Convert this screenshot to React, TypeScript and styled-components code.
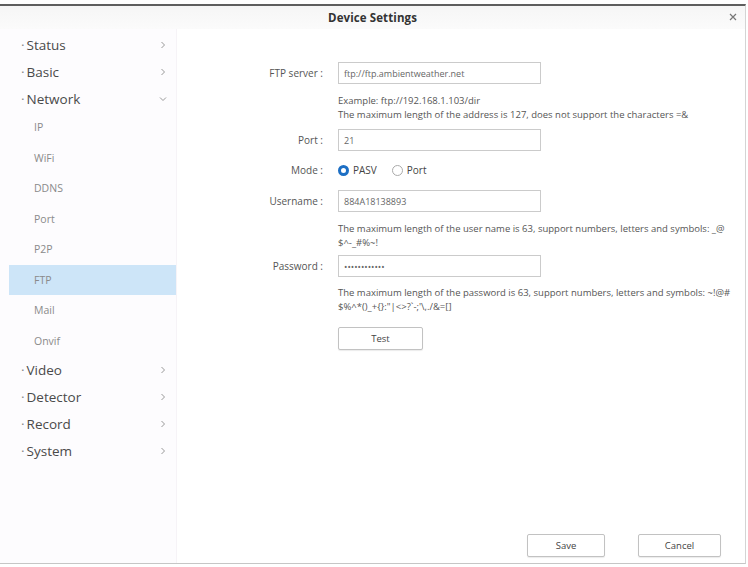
import styled, { createGlobalStyle } from 'styled-components';

const GlobalStyle = createGlobalStyle`
  html, body {
    margin: 0;
    padding: 0;
    background: #ffffff;
  }
  body {
    font-family: "Open Sans", "Noto Sans", sans-serif;
    color: #555;
  }
`;

const Dialog = styled.div`
  box-sizing: border-box;
  margin-top: 4px;
  width: 746px;
  height: 560px;
  border-top: 2px solid #5e5e5e;
  border-right: 1px solid #d4d4d4;
  border-bottom: 1px solid #c6c6c6;
  display: flex;
  flex-direction: column;
`;

const Header = styled.div`
  height: 23px;
  flex: none;
  position: relative;
  display: flex;
  align-items: center;
  justify-content: center;
  background: linear-gradient(#f6f6f6, #fbfbfb);
`;

const Title = styled.div`
  font-size: 11.5px;
  font-weight: 700;
  color: #333;
  letter-spacing: 0.1px;
`;

const Close = styled.div`
  position: absolute;
  right: 7px;
  top: 6px;
  width: 10px;
  height: 10px;
  svg {
    display: block;
  }
`;

const Body = styled.div`
  flex: 1;
  display: flex;
  min-height: 0;
`;

const Sidebar = styled.div`
  width: 177px;
  flex: none;
  box-sizing: border-box;
  padding: 2px 0 0 9px;
  background: #fdfcfe;
  border-right: 1px solid #f6f3f7;
`;

const TopItem = styled.div`
  height: 27px;
  display: flex;
  align-items: center;
  justify-content: space-between;
  padding: 0 9px 0 12px;
  font-size: 13.5px;
  color: #4a4a4a;
  svg {
    display: block;
  }
`;

const Bullet = styled.span`
  color: #888;
  margin-right: 2px;
`;

const SubItem = styled.div<{ active?: boolean }>`
  height: 30.5px;
  display: flex;
  align-items: center;
  padding-left: 25px;
  font-size: 10.5px;
  color: #8a8a8a;
  background: ${(p) => (p.active ? '#cde5f8' : 'transparent')};
`;

const Content = styled.div`
  flex: 1;
  display: flex;
  flex-direction: column;
  padding-top: 33px;
`;

const Form = styled.div`
  display: grid;
  grid-template-columns: 146px 1fr;
  column-gap: 15px;
  align-items: center;
`;

const Label = styled.div<{ mt?: number }>`
  grid-column: 1;
  text-align: right;
  font-size: 10px;
  color: #555;
  margin-top: ${(p) => p.mt ?? 0}px;
`;

const Field = styled.div<{ mt?: number }>`
  grid-column: 2;
  height: 22px;
  display: flex;
  align-items: center;
  margin-top: ${(p) => p.mt ?? 0}px;
`;

const Input = styled.div`
  box-sizing: border-box;
  width: 203px;
  height: 22px;
  border: 1px solid #cbcbcb;
  padding-left: 5px;
  display: flex;
  align-items: center;
  font-size: 9px;
  color: #666;
  background: #fff;
`;

const Hint = styled.div<{ mt: number }>`
  grid-column: 2;
  margin-top: ${(p) => p.mt}px;
  font-size: 9.5px;
  line-height: 14px;
  color: #555;
  white-space: nowrap;
`;

const Radio = styled.span<{ checked?: boolean }>`
  box-sizing: border-box;
  width: 11px;
  height: 11px;
  border-radius: 50%;
  border: ${(p) => (p.checked ? '3px solid #1d6fc4' : '1px solid #aaa')};
  margin-right: 4px;
  background: #fff;
`;

const RadioText = styled.span`
  font-size: 10px;
  color: #444;
  margin-right: 15px;
`;

const Button = styled.div<{ w: number }>`
  box-sizing: border-box;
  width: ${(p) => p.w}px;
  height: 23px;
  border: 1px solid #c2c2c2;
  border-radius: 2px;
  background: #fff;
  box-shadow: 0 1px 1px rgba(0, 0, 0, 0.08);
  display: flex;
  align-items: center;
  justify-content: center;
  font-size: 9.5px;
  color: #444;
`;

const Footer = styled.div`
  margin-top: auto;
  display: flex;
  justify-content: flex-end;
  gap: 33px;
  padding: 0 24px 6px 0;
`;

const Chevron = ({ down }: { down?: boolean }) => (
  <svg width="8" height="8" viewBox="0 0 8 8">
    {down ? (
      <polyline points="1,2.5 4,5.5 7,2.5" fill="none" stroke="#999" strokeWidth="1" />
    ) : (
      <polyline points="2.5,1 5.5,4 2.5,7" fill="none" stroke="#999" strokeWidth="1" />
    )}
  </svg>
);

const topBefore = ['Status', 'Basic'];
const subItems = ['IP', 'WiFi', 'DDNS', 'Port', 'P2P', 'FTP', 'Mail', 'Onvif'];
const topAfter = ['Video', 'Detector', 'Record', 'System'];

const Top = ({ name, open }: { name: string; open?: boolean }) => (
  <TopItem>
    <span>
      <Bullet>·</Bullet>
      {name}
    </span>
    <Chevron down={open} />
  </TopItem>
);

export default function App() {
  return (
    <>
      <GlobalStyle />
      <Dialog>
        <Header>
          <Title>Device Settings</Title>
          <Close>
            <svg width="10" height="10" viewBox="0 0 10 10">
              <path d="M2 2 L8 8 M8 2 L2 8" stroke="#777" strokeWidth="1.2" />
            </svg>
          </Close>
        </Header>
        <Body>
          <Sidebar>
            {topBefore.map((n) => (
              <Top key={n} name={n} />
            ))}
            <Top name="Network" open />
            {subItems.map((n) => (
              <SubItem key={n} active={n === 'FTP'}>
                {n}
              </SubItem>
            ))}
            {topAfter.map((n) => (
              <Top key={n} name={n} />
            ))}
          </Sidebar>
          <Content>
            <Form>
              <Label>FTP server :</Label>
              <Field>
                <Input>ftp://ftp.ambientweather.net</Input>
              </Field>
              <Hint mt={10}>
                Example: ftp://192.168.1.103/dir
                <br />
                The maximum length of the address is 127, does not support the characters =&amp;
              </Hint>
              <Label mt={7}>Port :</Label>
              <Field mt={7}>
                <Input>21</Input>
              </Field>
              <Label mt={8}>Mode :</Label>
              <Field mt={8}>
                <Radio checked />
                <RadioText>PASV</RadioText>
                <Radio />
                <RadioText>Port</RadioText>
              </Field>
              <Label mt={9}>Username :</Label>
              <Field mt={9}>
                <Input>884A18138893</Input>
              </Field>
              <Hint mt={10}>
                The maximum length of the user name is 63, support numbers, letters and symbols: _@
                <br />
                $^-_#%~!
              </Hint>
              <Label mt={5}>Password :</Label>
              <Field mt={5}>
                <Input>••••••••••••</Input>
              </Field>
              <Hint mt={9}>
                The maximum length of the password is 63, support numbers, letters and symbols: ~!@#
                <br />
                $%^*()_+{'{}'}:"|&lt;&gt;?`-;'\,./&amp;=[]
              </Hint>
              <Field mt={13}>
                <Button w={85}>Test</Button>
              </Field>
            </Form>
            <Footer>
              <Button w={78}>Save</Button>
              <Button w={83}>Cancel</Button>
            </Footer>
          </Content>
        </Body>
      </Dialog>
    </>
  );
}
